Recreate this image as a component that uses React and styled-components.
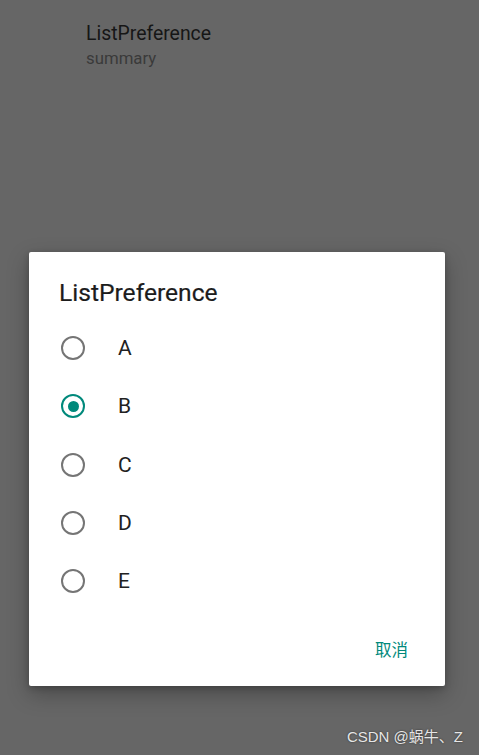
import React, { useState } from 'react';
import styled, { createGlobalStyle } from 'styled-components';

const Global = createGlobalStyle`
  html, body {
    margin: 0;
    padding: 0;
    background: #666666;
  }
  body {
    font-family: Roboto, "Noto Sans CJK SC", sans-serif;
  }
`;

const Screen = styled.div`
  position: relative;
  width: 479px;
  height: 755px;
  overflow: hidden;
  background: #666666;
  display: flex;
  flex-direction: column;
`;

const PrefItem = styled.div`
  padding: 21px 0 0 86px;
  height: 252px;
  box-sizing: border-box;
`;

const PrefTitle = styled.div`
  font-size: 19.4px;
  line-height: 25px;
  color: #161616;
`;

const PrefSummary = styled.div`
  font-size: 16.8px;
  line-height: 25px;
  color: #3a3a3a;
`;

const Dialog = styled.div`
  margin: 0 0 0 29px;
  width: 416px;
  background: #ffffff;
  border-radius: 2px;
  box-shadow: 0 8px 22px rgba(0, 0, 0, 0.28), 0 2px 6px rgba(0, 0, 0, 0.2);
  padding: 22px 0 13px;
  box-sizing: border-box;
`;

const DialogTitle = styled.div`
  padding-left: 30px;
  font-size: 24.6px;
  line-height: 38px;
  color: #1c1c1c;
  -webkit-text-stroke: 0.2px #1c1c1c;
`;

const List = styled.div`
  margin-top: 7px;
  display: flex;
  flex-direction: column;
`;

const Row = styled.label`
  height: 58.3px;
  display: flex;
  align-items: center;
  padding-left: 32px;
  cursor: pointer;
`;

const Radio = styled.span`
  width: 24px;
  height: 24px;
  box-sizing: border-box;
  border-radius: 50%;
  border: 2.3px solid ${p => (p.$checked ? '#00897b' : '#757575')};
  display: flex;
  align-items: center;
  justify-content: center;
  &::after {
    content: '';
    width: 11px;
    height: 11px;
    border-radius: 50%;
    background: #00897b;
    display: ${p => (p.$checked ? 'block' : 'none')};
  }
`;

const Label = styled.span`
  margin-left: 33px;
  font-size: 21px;
  color: #212121;
`;

const Actions = styled.div`
  margin-top: 15px;
  height: 48px;
  display: flex;
  justify-content: flex-end;
  align-items: center;
  padding-right: 29px;
`;

const TextButton = styled.button`
  border: none;
  background: none;
  padding: 8px;
  font-family: Roboto, "Noto Sans CJK SC", sans-serif;
  font-size: 16.5px;
  color: #00897b;
  cursor: pointer;
`;

const Watermark = styled.div`
  position: absolute;
  right: 16px;
  bottom: 9px;
  font-family: "Liberation Sans", "Noto Sans CJK SC", sans-serif;
  font-size: 15px;
  color: #e6e6e6;
  text-shadow: 0 0 2px rgba(0, 0, 0, 0.6);
`;

const options = ['A', 'B', 'C', 'D', 'E'];

export default function App() {
  const [value, setValue] = useState('B');
  return (
    <Screen>
      <Global />
      <PrefItem>
        <PrefTitle>ListPreference</PrefTitle>
        <PrefSummary>summary</PrefSummary>
      </PrefItem>
      <Dialog>
        <DialogTitle>ListPreference</DialogTitle>
        <List>
          {options.map(o => (
            <Row key={o} onClick={() => setValue(o)}>
              <Radio $checked={value === o} />
              <Label>{o}</Label>
            </Row>
          ))}
        </List>
        <Actions>
          <TextButton>取消</TextButton>
        </Actions>
      </Dialog>
      <Watermark>CSDN @蜗牛、Z</Watermark>
    </Screen>
  );
}
